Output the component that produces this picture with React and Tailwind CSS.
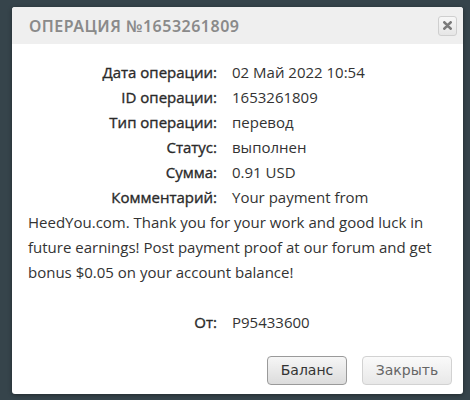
import React from 'react'

const rows = [
  ['Дата операции:', '02 Май 2022 10:54'],
  ['ID операции:', '1653261809'],
  ['Тип операции:', 'перевод'],
  ['Статус:', 'выполнен'],
  ['Сумма:', '0.91 USD'],
]

function Row({ label, children }) {
  return (
    <div>
      <span className="inline-block w-[204px] pr-[15px] text-right text-[#2a2a2a] [-webkit-text-stroke:0.35px_#2a2a2a]">
        {label}
      </span>
      {children}
    </div>
  )
}

export default function App() {
  return (
    <div className="min-h-[400px] w-[470px] bg-[#36444b] pt-[7px] pl-[12px]">
      <div className="w-[451px] h-[387px] bg-white rounded-[3px] shadow-[0_1px_4px_rgba(0,0,0,0.4)] flex flex-col">
        <div className="h-[37px] bg-[#efefef] rounded-t-[3px] flex items-center justify-between pl-[17px] pr-[6px]">
          <div
            className="text-[16px] font-semibold tracking-[0.5px] text-[#8a8a8a] uppercase"
            style={{ fontFamily: '"Noto Sans", sans-serif' }}
          >
            Операция №1653261809
          </div>
          <button className="w-[19px] h-[20px] border border-[#cfcfcf] rounded-[3px] bg-gradient-to-b from-[#f7f7f7] to-[#e6e6e6] flex items-center justify-center">
            <svg width="9" height="9" viewBox="0 0 10 10">
              <path d="M1.5 1.5 L8.5 8.5 M8.5 1.5 L1.5 8.5" stroke="#7a7a7a" strokeWidth="3" strokeLinecap="round" />
            </svg>
          </button>
        </div>
        <div
          className="pt-[16px] pl-[16px] pr-[18px] text-[15px] leading-[25px] text-[#333]"
          style={{ fontFamily: '"Open Sans", sans-serif' }}
        >
          {rows.map(([l, v]) => (
            <Row key={l} label={l}>{v}</Row>
          ))}
          <Row label="Комментарий:">
            Your payment from HeedYou.com. Thank you for your work and good luck in future earnings! Post payment
            proof at our forum and get bonus $0.05 on your account balance!
          </Row>
          <div className="h-[25px]" />
          <Row label="От:">P95433600</Row>
        </div>
        <div
          className="mt-auto mb-[9px] flex justify-end gap-[15px] pr-[11px] text-[14px]"
          style={{ fontFamily: '"DejaVu Sans", sans-serif' }}
        >
          <button className="w-[80px] h-[29px] rounded-[4px] border border-[#9a9a9a] bg-gradient-to-b from-[#f6f6f6] to-[#dcdcdc] text-[#333]">
            Баланс
          </button>
          <button className="w-[90px] h-[29px] rounded-[4px] border border-[#d2d2d2] bg-gradient-to-b from-[#fafafa] to-[#e8e8e8] text-[#666]">
            Закрыть
          </button>
        </div>
      </div>
    </div>
  )
}
